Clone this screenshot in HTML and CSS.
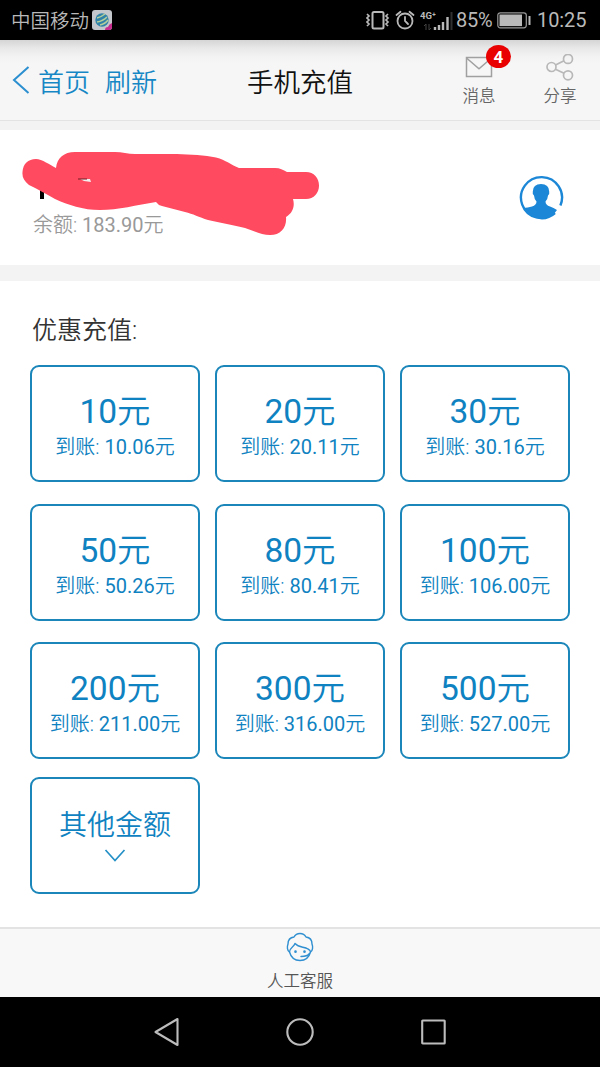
FILE: index.html
```html
<!DOCTYPE html>
<html lang="zh-CN">
<head>
<meta charset="utf-8">
<title>手机充值</title>
<link rel="stylesheet" href="styles.css">
</head>
<body>
<div class="status">
  <span class="carrier">中国移动</span>
  <svg class="app-icon" width="20" height="20" viewBox="0 0 20 20"><rect width="20" height="20" rx="3" fill="#c4c7cb"/><circle cx="10" cy="10" r="6.7" fill="#3182a8"/><path d="M5 8q4-1 8-4M5 12q6-1 10-5M8 15q5-1 8-5" fill="none" stroke="#b3cf9b" stroke-width="1.500"/><path d="M20 13v4q0 3-3 3h-4q0-3 3-3 1-3 4-4z" fill="#c72b8d"/></svg>
  <div class="status-right">
    <svg class="vibrate" width="24" height="20" viewBox="0 0 24 20" fill="none" stroke="#b9b9b9"><rect x="6.500" y="2" width="11" height="16.500" rx="1.500" stroke-width="2"/><path d="M1 4l2 2-2 2 2 2-2 2 2 2-2 2M22 4l-2 2 2 2-2 2 2 2-2 2 2 2" stroke-width="1.700"/></svg>
    <svg class="alarm" width="20" height="20" viewBox="0 0 20 20" fill="none" stroke="#b9b9b9" stroke-width="1.800" stroke-linecap="round"><circle cx="10" cy="11" r="7.500"/><path d="M10 7v4l3 3M1.500 5l4-3.300M18.500 5l-4-3.300"/></svg>
    <svg class="signal" width="34" height="22" viewBox="0 0 34 22"><text class="net" x="0" y="9.500">4G⁺</text><path d="M6 21v-6l-2 2M9 15v6l2-2" stroke="#444" fill="none"/><path d="M15 18v3M19 16v5M23 13v8M27.500 8v13" stroke="#b9b9b9" stroke-width="2.400"/><path d="M31.500 3v18" stroke="#303030" stroke-width="2"/></svg>
    <span class="percent">85%</span>
    <svg class="battery" width="34" height="17" viewBox="0 0 34 17"><rect x=".8" y=".8" width="28.500" height="15" rx="2.500" fill="none" stroke="#999" stroke-width="1.200"/><rect x="2.500" y="2.500" width="22.500" height="11.600" fill="#b9b9b9"/><path d="M32.500 4v9" stroke="#b9b9b9" stroke-width="2"/></svg>
    <span class="clock">10:25</span>
  </div>
</div>

<header class="header">
  <nav class="header-left">
    <svg class="back" width="18" height="28" viewBox="0 0 18 28" fill="none" stroke="#2b8fd0" stroke-width="2"><path d="M16.500 1L2 14l14.500 13"/></svg>
    <a class="link">首页</a><a class="link">刷新</a>
  </nav>
  <h1 class="title">手机充值</h1>
  <div class="header-right">
    <div class="tool">
      <svg width="28" height="28" viewBox="0 0 28 28" fill="none" stroke="#a0a0a0" stroke-width="1.500"><rect x="1.500" y="3.500" width="25" height="19"/><path d="M1.500 4L14 14.800 26.500 4"/></svg>
      <span>消息</span><b class="badge">4</b>
    </div>
    <div class="tool">
      <svg width="28" height="28" viewBox="0 0 28 28" fill="none" stroke="#b8b8b8" stroke-width="1.700"><circle cx="5.500" cy="13" r="4.500"/><circle cx="22" cy="4.900" r="4.500"/><circle cx="22" cy="21.300" r="4.500"/><path d="M9.500 11l8.500-4.300M9.500 15.200l8.500 4"/></svg>
      <span>分享</span>
    </div>
  </div>
</header>

<section class="account">
  <p class="balance">余额: <span class="num">183.90</span>元</p>
  <svg class="avatar" width="46" height="46" viewBox="0 0 46 46"><path d="M41.400 30.500A20.500 20.500 0 1 0 36 38" fill="none" stroke="#1b87d6" stroke-width="2.400"/><path d="M4 33Q9 32.500 13 31.500q4.500-1.500 4.500-5-2.300-2.500-2.500-6-1.800-1-1.200-4 .2-7.500 8.200-7.500t8.200 7.500q.6 3-1.200 4-.2 3.500-2.500 6 0 3.500 4.500 5 3.500 1 7 3.500-5.500 8.800-16 8.800T4 33z" fill="#1b87d6"/></svg>
  <svg class="scribble" width="310" height="100" viewBox="20 144 310 100"><path d="M40 180h4v19h-4z" fill="#000"/><path d="M56 168C57 158 64 152 75 152H115C122 152 128 154 135 154H177C190 154.500 205 155 216 157.500C226 160 231 165 239 168H275C280 168 283 170 287 172H306C314 172 319 178 319 185.500C319 193 314 199 306 199H293C295 206 293 213 286 217C287 227 281 235 270 235C262 235 254 231 245 228C234 225 220 223 208 220C199 217 193 214 185 212L162 206Q158 205 156 202C137 205 118 210 100 210C83 210 68 205 55 199C46 194 38 189 29 185C24 181 22 177 22.500 172C23 164 28 159 36 159C42 159 50 165 56 168Z" fill="#ff4a60"/><path d="M80 179h10l1 3-7-1z" fill="#f2efef"/><path d="M78 179h9" stroke="#731b24"/></svg>
</section>

<main class="recharge">
  <h2 class="caption">优惠充值:</h2>
  <div class="grid">
    <div class="card"><strong><span class="num">10</span>元</strong><p>到账: <span class="num">10.06</span>元</p></div>
    <div class="card"><strong><span class="num">20</span>元</strong><p>到账: <span class="num">20.11</span>元</p></div>
    <div class="card"><strong><span class="num">30</span>元</strong><p>到账: <span class="num">30.16</span>元</p></div>
    <div class="card"><strong><span class="num">50</span>元</strong><p>到账: <span class="num">50.26</span>元</p></div>
    <div class="card"><strong><span class="num">80</span>元</strong><p>到账: <span class="num">80.41</span>元</p></div>
    <div class="card"><strong><span class="num">100</span>元</strong><p>到账: <span class="num">106.00</span>元</p></div>
    <div class="card"><strong><span class="num">200</span>元</strong><p>到账: <span class="num">211.00</span>元</p></div>
    <div class="card"><strong><span class="num">300</span>元</strong><p>到账: <span class="num">316.00</span>元</p></div>
    <div class="card"><strong><span class="num">500</span>元</strong><p>到账: <span class="num">527.00</span>元</p></div>
  </div>
  <div class="card other">
    <em>其他金额</em>
    <svg width="22" height="13" viewBox="0 0 22 13" fill="none" stroke="#2490c6" stroke-width="1.700"><path d="M1.500 1L11 11.500 20.500 1"/></svg>
  </div>
</main>

<footer class="service">
  <svg width="28" height="30" viewBox="0 0 28 30" fill="none" stroke="#2f8fd0" stroke-width="1.400" stroke-linecap="round" stroke-linejoin="round"><path d="M3.500 20C1 18.500 1 14.500 2 12c0-4 2-6.500 6-7 2.500-4.700 9.500-4.700 12 0 4 .5 6 3 6 7 1 2.500 1 6.500-1.500 8"/><path d="M3.500 20C3.500 15.500 8 15 9 11.500c4 4.500 9 3 13 5.500 2 1 2.500 2 2.500 3-1.500 5.500-5 8.500-10.500 8.500S5 25.500 3.500 20z"/><path d="M23.500 21.500c-2 3-5 3-8.500 3"/><path d="M9.500 19.500v.2M18.500 19.500v.2" stroke-width="2.600"/></svg>
  <span>人工客服</span>
</footer>

<div class="navbar">
  <svg width="28" height="30" viewBox="0 0 28 30"><path d="M25.500 2v26L3.500 15z"/></svg>
  <svg width="30" height="30" viewBox="0 0 30 30"><circle cx="15" cy="15" r="12.700"/></svg>
  <svg width="28" height="30" viewBox="0 0 28 30"><rect x="2.200" y="3.500" width="22.500" height="23" rx=".5"/></svg>
</div>
</body>
</html>
```
FILE: styles.css
```css
* { box-sizing: border-box; }
body {
  margin: 0;
  width: 600px;
  height: 1067px;
  display: flex;
  flex-direction: column;
  overflow: hidden;
  background: #f3f3f3;
  font-family: Roboto, "Noto Sans CJK SC", sans-serif;
  font-weight: 350;
}
svg { display: block; flex: none; }
h1, h2, p { margin: 0; font-weight: inherit; }
.num { font-weight: 400; }

.status {
  flex: none;
  height: 40px;
  display: flex;
  align-items: center;
  padding: 0 13px 0 11px;
  background: #000;
  color: #b9b9b9;
  font-size: 20px;
}
.carrier { font-size: 19.5px; line-height: 28px; padding-top: 3px; }
.app-icon { margin-left: 3px; }
.status-right { display: flex; align-items: center; margin-left: auto; font-weight: 400; }
.alarm { margin-left: 5px; }
.signal { margin-left: 5px; }
.net { font: bold 9.5px Roboto, sans-serif; fill: #b9b9b9; }
.percent { margin-left: 2px; width: 41px; letter-spacing: -.3px; }
.clock { margin-left: 6px; width: 50px; letter-spacing: -.1px; }

.header {
  flex: none;
  height: 81px;
  display: grid;
  grid-template-columns: 1fr auto 1fr;
  align-items: center;
  background: linear-gradient(#d5d5d5, #e8e8e8 8px, #f3f3f3 17px, #f6f6f6 24px);
  border-bottom: 1px solid #e3e3e3;
}
.header-left { display: flex; align-items: center; padding-left: 12px; }
.link { margin-left: 8px; font-size: 26px; color: #1687c5; }
.link + .link { margin-left: 15px; }
.title { font-size: 26.5px; color: #111; }
.header-right { display: flex; justify-content: flex-end; padding-right: 23px; gap: 47px; }
.tool {
  position: relative;
  display: flex;
  flex-direction: column;
  align-items: center;
  width: 34px;
  font-size: 16.5px;
  line-height: 24px;
  color: #666;
  padding-top: 3px;
  gap: 3px;
}
.badge {
  position: absolute;
  left: 24px;
  top: -6px;
  width: 25px;
  height: 23px;
  border-radius: 50%;
  background: #e90000;
  color: #fff;
  font-size: 17px;
  line-height: 24px;
  text-align: center;
}

.account {
  position: relative;
  flex: none;
  margin-top: 9px;
  height: 135px;
  display: flex;
  align-items: center;
  justify-content: space-between;
  padding: 0 35px 0 33px;
  background: #fff;
}
.balance { padding-top: 54px; font-size: 20px; line-height: 28px; color: #999; }
.scribble { position: absolute; left: 20px; top: 14px; }

.recharge { flex: none; margin-top: 16px; height: 646px; padding: 32px 30px 0; background: #fff; }
.caption { padding-left: 2px; height: 52px; font-size: 25px; line-height: 36px; color: #333; }
.grid { display: grid; grid-template-columns: repeat(3, 170px); gap: 21.5px 15px; }
.card {
  width: 170px;
  height: 117px;
  display: flex;
  flex-direction: column;
  align-items: center;
  padding-top: 24px;
  border: 2px solid #1b86b9;
  border-radius: 9px;
  color: #0f82c1;
}
.card strong { font-size: 33.5px; line-height: 42px; font-weight: inherit; }
.card p { font-size: 20px; line-height: 28px; white-space: nowrap; }
.other { margin-top: 18px; padding-top: 26px; }
.other em { font-style: normal; font-size: 28px; line-height: 42px; }
.other svg { margin-top: 2px; }

.service {
  flex: none;
  height: 70px;
  display: flex;
  flex-direction: column;
  align-items: center;
  padding-top: 3px;
  background: #f8f8f8;
  border-top: 2px solid #e3e3e3;
  color: #555;
  font-size: 16.5px;
  line-height: 24px;
}
.service span { margin-top: 8px; }

.navbar {
  flex: none;
  height: 70px;
  display: flex;
  justify-content: center;
  align-items: center;
  gap: 105px;
  background: #000;
  fill: none;
  stroke: #bcbcbc;
  stroke-width: 2.1;
  stroke-linejoin: round;
}
```
